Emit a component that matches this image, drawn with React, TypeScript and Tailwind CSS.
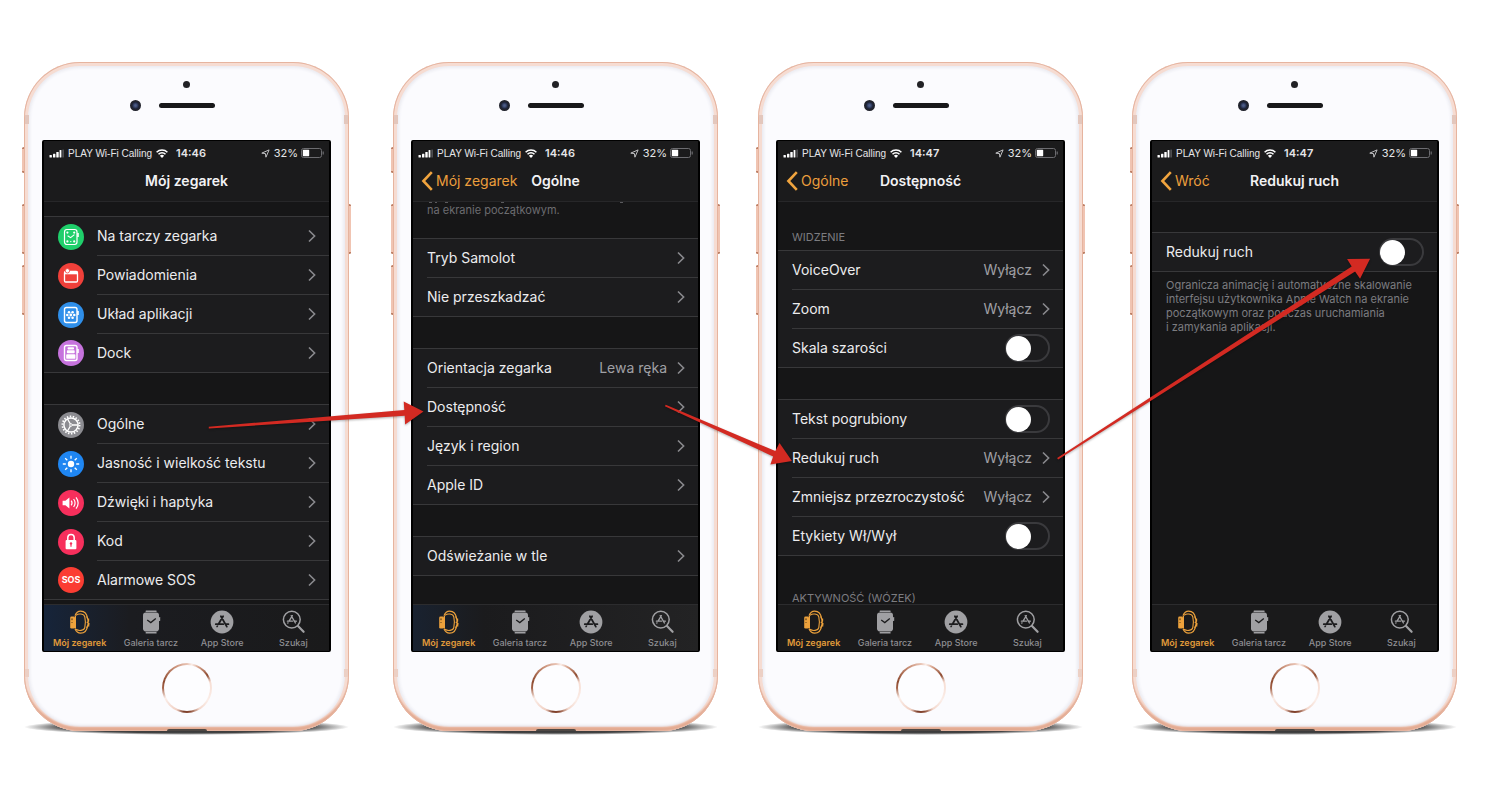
import type { ReactNode } from "react";

type RowData = { label: string; value?: string; toggle?: boolean; icon?: ReactNode };

function Disc({ color, children }: { color: string; children: ReactNode }) {
  return (
    <svg viewBox="0 0 26 26" className="size-[26px] shrink-0" fill="none" stroke="#fff" strokeWidth="1.2" aria-hidden="true">
      <circle cx="13" cy="13" r="13" fill={color} stroke="none" />
      {children}
    </svg>
  );
}

const faceIcon = (
  <Disc color="#1fcf6b">
    <rect x="6.5" y="5.5" width="12.5" height="15" rx="2.4" />
    <path d="M20 9v4" strokeWidth="1.6" />
    <path d="M9.6 11.8l3 1.8 3.8-3" strokeWidth="1.1" />
    <g fill="#fff" stroke="none">
      <circle cx="9.4" cy="8.6" r="1.1" />
      <circle cx="16.2" cy="8.6" r="1.1" />
      <circle cx="9.4" cy="17.4" r="1.1" />
      <circle cx="16.2" cy="17.4" r="1.1" />
      <circle cx="12.8" cy="17.6" r="0.7" />
    </g>
  </Disc>
);

const notifyIcon = (
  <Disc color="#f0403a">
    <rect x="6.5" y="8.5" width="13" height="10.5" rx="1.2" strokeWidth="1.3" />
    <path d="M6.5 8.5h13v2.8h-13z" fill="#fff" stroke="none" />
    <circle cx="9.4" cy="7.8" r="2.2" fill="#fff" stroke="#f0403a" strokeWidth="0.8" />
  </Disc>
);

const gridIcon = (
  <Disc color="#2f8fea">
    <rect x="6.5" y="5.5" width="12.5" height="15" rx="2" strokeWidth="1.4" />
    <path d="M20 9v4" strokeWidth="1.6" />
    <g fill="#fff" stroke="none">
      <circle cx="9.3" cy="13" r="1.3" />
      <circle cx="12.8" cy="13" r="1.4" />
      <circle cx="16.3" cy="13" r="1.3" />
      <circle cx="11" cy="10.2" r="1.3" />
      <circle cx="14.6" cy="10.2" r="1.3" />
      <circle cx="11" cy="15.8" r="1.3" />
      <circle cx="14.6" cy="15.8" r="1.3" />
    </g>
  </Disc>
);

const dockIcon = (
  <Disc color="#c673dd">
    <rect x="6.5" y="5.5" width="12.5" height="15" rx="2" strokeWidth="1.4" />
    <path d="M20 9v4" strokeWidth="1.6" />
    <g fill="#fff" stroke="none">
      <rect x="9.6" y="7.2" width="6.4" height="2.2" rx="0.7" />
      <rect x="8.9" y="10.2" width="7.8" height="3" rx="0.8" />
      <rect x="8.2" y="14.2" width="9.2" height="4.6" rx="0.9" />
    </g>
  </Disc>
);

const gearIcon = (
  <Disc color="#8c8c91">
    <circle cx="13" cy="13" r="7.1" strokeWidth="1.5" />
    <circle cx="13" cy="13" r="8.6" strokeWidth="1.8" strokeDasharray="1.5 1.5" />
    <path d="M13.4 13h6.4M12.8 13.2l-3.4 6M12.8 12.8l-3.4-6" strokeWidth="1.3" />
    <circle cx="13" cy="13" r="1.3" fill="#8c8c91" strokeWidth="0.9" />
  </Disc>
);

const sunIcon = (
  <Disc color="#1f86f2">
    <circle cx="13" cy="13" r="3.2" fill="#fff" stroke="none" />
    <path
      d="M13 4.8v3M13 18.2v3M4.8 13h3M18.2 13h3M7.2 7.2l2.1 2.1M16.7 16.7l2.1 2.1M7.2 18.8l2.1-2.1M16.7 9.3l2.1-2.1"
      strokeWidth="1.3"
    />
  </Disc>
);

const soundIcon = (
  <Disc color="#f72f5c">
    <path d="M4.6 10.8h2.8l4-3.2v10.8l-4-3.2H4.6z" fill="#fff" stroke="none" />
    <path d="M13.2 10.6c1 1.4 1 3.4 0 4.8M15.6 9c1.8 2.4 1.8 5.6 0 8M18 7.4c2.6 3.4 2.6 7.8 0 11.2" />
  </Disc>
);

const lockIcon = (
  <Disc color="#f72f5c">
    <path d="M9.8 12V8.6a3.2 3.2 0 0 1 6.4 0V12" strokeWidth="1.5" />
    <rect x="7.6" y="11" width="10.8" height="9.2" rx="1" fill="#fff" stroke="none" />
    <circle cx="13" cy="14.4" r="1.2" fill="#f72f5c" stroke="none" />
    <path d="M13 15v2.8" stroke="#f72f5c" />
  </Disc>
);

const sosIcon = (
  <span className="flex size-[26px] shrink-0 items-center justify-center rounded-full bg-[#fb3d33] text-[9px] font-bold text-white">
    SOS
  </span>
);

function Chevron() {
  return (
    <svg viewBox="0 0 8 14" className="h-3.5 w-2 shrink-0" fill="none" stroke="#8a8a8e" strokeWidth="1.6" aria-hidden="true">
      <path d="M1 1.5L6.6 7 1 12.5" />
    </svg>
  );
}

function Row({ row }: { row: RowData }) {
  const line = "box-content flex h-[38px] min-w-0 flex-1 items-center border-b border-[#38383a] pr-[13px] group-last:border-b-0";
  const text = "flex-1 whitespace-nowrap text-left text-sm text-[#ececee]";
  if (row.toggle) {
    return (
      <li className="group">
        <label className="flex items-center pl-3.5">
          <span className={line}>
            <span className={text}>{row.label}</span>
            <input
              type="checkbox"
              role="switch"
              className="flex h-7 w-[45px] shrink-0 appearance-none items-center rounded-full border-2 border-[#3a3a3d] before:-ml-px before:size-[25px] before:rounded-full before:bg-white checked:justify-end checked:bg-[#34c759]"
            />
          </span>
        </label>
      </li>
    );
  }
  return (
    <li className="group">
      <button type="button" className="flex w-full items-center gap-[13px] pl-3.5">
        {row.icon}
        <span className={line}>
          <span className={text}>{row.label}</span>
          {row.value && <span className="mr-2.5 whitespace-nowrap text-sm text-[#a0a0a5]">{row.value}</span>}
          <Chevron />
        </span>
      </button>
    </li>
  );
}

function Group({ rows }: { rows: RowData[] }) {
  return (
    <ul className="border-y border-[#38383a] bg-[#1c1c1e]">
      {rows.map((row) => (
        <Row key={row.label} row={row} />
      ))}
    </ul>
  );
}

function StatusBar({ time }: { time: string }) {
  return (
    <div className="flex h-6 items-center pl-[5px] pr-1 text-[#e6e6e8]">
      <svg viewBox="0 0 16 9" className="h-[9px] w-4 shrink-0" fill="#fff" aria-hidden="true">
        <rect x="0.5" y="6" width="2.4" height="2.6" rx="0.6" />
        <rect x="4" y="4.8" width="2.4" height="3.8" rx="0.6" />
        <rect x="7.3" y="3" width="2.4" height="5.6" rx="0.6" />
        <rect x="10.6" y="1" width="1.8" height="7.6" rx="0.6" />
        <rect x="13.4" y="0.4" width="1.4" height="8.2" rx="0.5" fill="#5c5c5f" />
      </svg>
      <span className="ml-[3px] whitespace-nowrap font-['Liberation_Sans',sans-serif] text-[10px]">PLAY Wi-Fi Calling</span>
      <svg viewBox="0 0 12 9" className="ml-1 h-[9px] w-3 shrink-0" fill="none" stroke="#fff" strokeWidth="1.5" aria-hidden="true">
        <path d="M0.6 3.2a7.6 7.6 0 0 1 10.8 0M2.5 5.3a5 5 0 0 1 7 0" />
        <path d="M6 9L3.9 6.7a3 3 0 0 1 4.2 0z" fill="#fff" stroke="none" />
      </svg>
      <span className="ml-2 text-[11px] font-semibold">{time}</span>
      <span className="flex-1" />
      <svg viewBox="0 0 10 10" className="size-[9px] shrink-0" fill="none" stroke="#d4d4d6" aria-hidden="true">
        <path d="M9 1L0.9 4.6l4 .5.6 4z" />
      </svg>
      <span className="ml-1 text-[11px]">32%</span>
      <svg viewBox="0 0 24 10" className="ml-[3px] h-2.5 w-6 shrink-0" aria-hidden="true">
        <rect x="0.5" y="0.5" width="20" height="9" rx="2" fill="none" stroke="#6c6c70" />
        <rect x="1.8" y="1.8" width="6.4" height="6.4" rx="0.6" fill="#fff" />
        <path d="M22.2 3.4v3.2" stroke="#6c6c70" strokeWidth="1.2" />
      </svg>
    </div>
  );
}

function NavBar({ title, back }: { title: string; back?: string }) {
  return (
    <div className="grid h-9 grid-cols-[1fr_auto_1fr] items-center pb-1">
      <div>
        {back && (
          <a href="#" className="ml-2 flex items-center gap-[3px] whitespace-nowrap text-sm text-[#ec9f3c]">
            <svg viewBox="0 0 12 20" className="h-5 w-3 shrink-0" fill="none" stroke="#f0a43e" strokeWidth="2.6" aria-hidden="true">
              <path d="M10.8 1.2L2.4 10l8.4 8.8" />
            </svg>
            {back}
          </a>
        )}
      </div>
      <h2 className="whitespace-nowrap text-sm font-semibold text-[#f2f2f4]">{title}</h2>
    </div>
  );
}

const tabs = [
  {
    label: "Mój zegarek",
    icon: (
      <svg viewBox="0 0 26 26" className="size-[26px]" fill="none" stroke="#eda23c" aria-hidden="true">
        <path d="M8 6.6C9.2 3.6 11 2.2 13.6 2.2c4 0 6.4 3 7 7.6M8 19.8c1.2 3 3 4.4 5.6 4.4 4 0 6.4-3 7-7.6" strokeWidth="1.2" />
        <path d="M9 6.2c2.6-2 8-1.6 8.8 1.6.8 3.4.8 7.4 0 10.8-.8 3.2-6.2 3.6-8.8 1.6" strokeWidth="1.1" />
        <path d="M19.6 7.2c1.8 3.4 1.8 8.6 0 12M21.6 9.4v2.8l-1.4 1 1.8 1.4-.4 3" strokeWidth="1.1" />
        <path d="M8.4 6.8v12.8" strokeWidth="1.2" />
        <rect x="3.2" y="7.6" width="4.8" height="12" rx="1.3" fill="#eda23c" stroke="none" />
        <path d="M5 9.4v1.8M5 13v.8" stroke="#2a2013" strokeWidth="0.9" />
      </svg>
    ),
  },
  {
    label: "Galeria tarcz",
    icon: (
      <svg viewBox="0 0 26 26" className="size-[26px]" aria-hidden="true">
        <rect x="7.6" y="1.4" width="11" height="1.6" rx="0.5" fill="#a0a0a3" />
        <rect x="7.6" y="23" width="11" height="1.6" rx="0.5" fill="#a0a0a3" />
        <rect x="5" y="3.6" width="16" height="18.8" rx="2.8" fill="#a0a0a3" />
        <rect x="21" y="8" width="1.2" height="4" rx="0.6" fill="#a0a0a3" />
        <path d="M9.2 11l3.6 2.6 5-4" fill="none" stroke="#1c1c1e" strokeWidth="1.3" />
      </svg>
    ),
  },
  {
    label: "App Store",
    icon: (
      <svg viewBox="0 0 26 26" className="size-[26px]" fill="none" aria-hidden="true">
        <circle cx="13" cy="13" r="11.4" fill="#a0a0a3" />
        <g stroke="#1c1c1e" strokeWidth="1.8" strokeLinecap="round">
          <path d="M14.1 7.2L9.4 15.2M11.9 7.2l5.9 10.4M6.8 15.2h7.4M17.4 15.2h2" />
          <path d="M8.4 17l-.4.6" strokeWidth="1.5" />
        </g>
      </svg>
    ),
  },
  {
    label: "Szukaj",
    icon: (
      <svg viewBox="0 0 26 26" className="size-[26px]" fill="none" stroke="#a0a0a3" aria-hidden="true">
        <circle cx="11.8" cy="10.6" r="8.4" strokeWidth="1.5" />
        <path d="M18 17l5.6 5.8" strokeWidth="2.2" strokeLinecap="round" />
        <path d="M12.4 6.6L9 12.2M11.2 6.6l4.2 7.4M7.4 12.2h5.2M14.8 12.2h1.6M8 13.8l-.2.3" strokeWidth="1.3" strokeLinecap="round" />
      </svg>
    ),
  },
];

function TabBar({ tint }: { tint: string }) {
  return (
    <nav className={"relative grid grid-cols-4 border-t border-[#2c2c2e] pb-[3px] pt-1 " + tint}>
      {tabs.map((tab, i) => (
        <a key={tab.label} href="#" className="flex flex-col items-center gap-[3px]">
          {tab.icon}
          <span
            className={
              i === 0
                ? "whitespace-nowrap text-[9px] font-semibold leading-[10px] text-[#e09a3a]"
                : "whitespace-nowrap text-[9px] font-medium leading-[10px] text-[#8e8e92]"
            }
          >
            {tab.label}
          </span>
        </a>
      ))}
    </nav>
  );
}

function Phone({
  time,
  title,
  back,
  tint = "bg-[#1a1a1b]",
  children,
}: {
  time: string;
  title: string;
  back?: string;
  tint?: string;
  children: ReactNode;
}) {
  const key = "absolute w-[3px] rounded-sm border-y-2 border-[#bd7f65] bg-[#f0c4b2]";
  return (
    <section className="relative w-[325px] shrink-0" aria-label={title}>
      <div className="absolute inset-x-0 -bottom-1 h-4 rounded-[50%] bg-[radial-gradient(closest-side,#222_0%,#444_75%,transparent_100%)]" />
      <div className={key + " -left-0.5 top-[85px] h-[26px]"} />
      <div className={key + " -left-0.5 top-[142px] h-[50px]"} />
      <div className={key + " -left-0.5 top-[203px] h-[50px]"} />
      <div className={key + " -right-0.5 top-[142px] h-[50px]"} />
      <div className="relative flex flex-col items-center rounded-[56px] bg-[#fbfbfe] pb-[18px] pt-[19px] shadow-[inset_0_0_0_1px_#e6b49f,inset_0_-5px_2px_-1px_#e3a990,inset_0_0_0_4px_#f6dcd2,inset_0_0_3px_6px_#ebebf1]">
        <i className="absolute left-px top-[53px] h-[9px] w-1 bg-[#e3c7bd]" />
        <i className="absolute right-px top-[53px] h-[9px] w-1 bg-[#e3c7bd]" />
        <i className="absolute bottom-[54px] left-px h-2 w-1 bg-[#ecd0c5]" />
        <i className="absolute bottom-[54px] right-px h-2 w-1 bg-[#ecd0c5]" />
        <i className="absolute bottom-0 h-0.5 w-10 rounded-t bg-[#4f4844]" />
        <div className="size-[7px] rounded-full bg-[#222226]" />
        <div className="mt-[11px] flex h-3 items-center justify-center gap-[18px]">
          <div className="size-[11px] rounded-full border-2 border-[#20222c] bg-[radial-gradient(circle,#4c5c88_15%,#1f2740_65%)]" />
          <div className="h-[5px] w-14 rounded-full bg-[#18181a]" />
          <div className="w-[11px]" />
        </div>
        <div className="mt-[29px] flex h-[512px] w-[289px] flex-col overflow-hidden rounded-[2px] border-x-2 border-y border-black bg-[#161617]">
          <header className="shrink-0 border-b border-[#272729] bg-[#1b1b1c]">
            <StatusBar time={time} />
            <NavBar title={title} back={back} />
          </header>
          <div className="min-h-0 flex-1 overflow-hidden">{children}</div>
          <TabBar tint={tint} />
        </div>
        <button
          type="button"
          aria-label="Home"
          className="mt-[11px] flex size-[50px] items-center justify-center rounded-full bg-[conic-gradient(#e8c3b4_0deg,#fbeee9_12deg,#d9a58e_28deg,#8d4a30_58deg,#f6ddd3_75deg,#fbeee9_120deg,#f3d8cd_150deg,#8a4a33_172deg,#7a3c28_188deg,#f0cfc2_205deg,#fbeee9_245deg,#a5644a_270deg,#8d4a30_285deg,#c99078_330deg,#e8c3b4_360deg)]"
        >
          <span className="size-[46px] rounded-full bg-[#fdfdff]" />
        </button>
      </div>
    </section>
  );
}

function Arrows() {
  return (
    <svg
      viewBox="24 62 1433 670"
      className="pointer-events-none absolute inset-0 size-full drop-shadow-[0_1px_1px_rgba(0,0,0,0.3)]"
      fill="#d32a22"
      aria-hidden="true"
    >
      <path d="M208 427.2L403.8 410.6L403.2 402L423 412L404.6 425L404.2 416.4L208 429z" />
      <path d="M665.6 405.2L775.4 451.6L779.6 443.6L792 461.6L770.4 465.2L773.2 457L664.8 406.8z" />
      <path d="M1057.6 458.6L1352.6 266.8L1348 259.4L1371 259L1361 279L1356 271.8L1058.6 460z" />
    </svg>
  );
}

export default function App() {
  return (
    <main className="flex min-h-screen items-start justify-center bg-white pb-[69px] pl-6 pr-[43px] pt-[62px] font-['Inter',sans-serif]">
      <div className="relative flex">
        <Phone time="14:46" title="Mój zegarek" tint="bg-linear-to-r from-[#16243a] via-[#1b1c20] via-30% to-[#1a1a1b]">
          <div className="flex flex-col gap-[31px] pt-3.5">
            <Group
              rows={[
                { label: "Na tarczy zegarka", icon: faceIcon },
                { label: "Powiadomienia", icon: notifyIcon },
                { label: "Układ aplikacji", icon: gridIcon },
                { label: "Dock", icon: dockIcon },
              ]}
            />
            <Group
              rows={[
                { label: "Ogólne", icon: gearIcon },
                { label: "Jasność i wielkość tekstu", icon: sunIcon },
                { label: "Dźwięki i haptyka", icon: soundIcon },
                { label: "Kod", icon: lockIcon },
                { label: "Alarmowe SOS", icon: sosIcon },
              ]}
            />
          </div>
        </Phone>

        <div className="ml-11 flex">
          <Phone
            time="14:46"
            title="Ogólne"
            back="Mój zegarek"
            tint="bg-linear-to-r from-[#192230] via-[#1b1b1d] via-25% to-[#232324]"
          >
            <svg viewBox="0 0 285 2" className="h-0.5 w-full" fill="#5a5a5d" aria-hidden="true">
              <path d="M16 0h3v1h-3zM22 0h2v1h-2zM32 0h3v1h-3zM88 0h3v1h-3zM207 0h3v1h-3z" />
            </svg>
            <p className="mb-[22px] pl-3.5 text-[11px] leading-3 text-[#6c6c70]">na ekranie początkowym.</p>
            <div className="flex flex-col gap-[31px]">
              <Group rows={[{ label: "Tryb Samolot" }, { label: "Nie przeszkadzać" }]} />
              <Group
                rows={[
                  { label: "Orientacja zegarka", value: "Lewa ręka" },
                  { label: "Dostępność" },
                  { label: "Język i region" },
                  { label: "Apple ID" },
                ]}
              />
              <Group rows={[{ label: "Odświeżanie w tle" }]} />
            </div>
          </Phone>
        </div>

        <div className="ml-10 flex">
          <Phone time="14:47" title="Dostępność" back="Ogólne">
            <h3 className="pb-1.5 pl-3.5 pt-7 text-[11px] leading-[14px] text-[#7c7c80]">WIDZENIE</h3>
            <div className="flex flex-col gap-[31px]">
              <Group
                rows={[
                  { label: "VoiceOver", value: "Wyłącz" },
                  { label: "Zoom", value: "Wyłącz" },
                  { label: "Skala szarości", toggle: true },
                ]}
              />
              <Group
                rows={[
                  { label: "Tekst pogrubiony", toggle: true },
                  { label: "Redukuj ruch", value: "Wyłącz" },
                  { label: "Zmniejsz przezroczystość", value: "Wyłącz" },
                  { label: "Etykiety Wł/Wył", toggle: true },
                ]}
              />
            </div>
            <h3 className="pl-3.5 pt-9 text-[11px] leading-3 text-[#7c7c80]">AKTYWNOŚĆ (WÓZEK)</h3>
          </Phone>
        </div>

        <div className="ml-[49px] flex">
          <Phone time="14:47" title="Redukuj ruch" back="Wróć">
            <div className="pt-[30px]">
              <Group rows={[{ label: "Redukuj ruch", toggle: true }]} />
            </div>
            <p className="whitespace-nowrap pl-3.5 pt-1.5 text-[11px] leading-[14px] text-[#7c7c80]">
              Ogranicza animację i automatyczne skalowanie
              <br />
              interfejsu użytkownika Apple Watch na ekranie
              <br />
              początkowym oraz podczas uruchamiania
              <br />i zamykania aplikacji.
            </p>
          </Phone>
        </div>
        <Arrows />
      </div>
    </main>
  );
}
